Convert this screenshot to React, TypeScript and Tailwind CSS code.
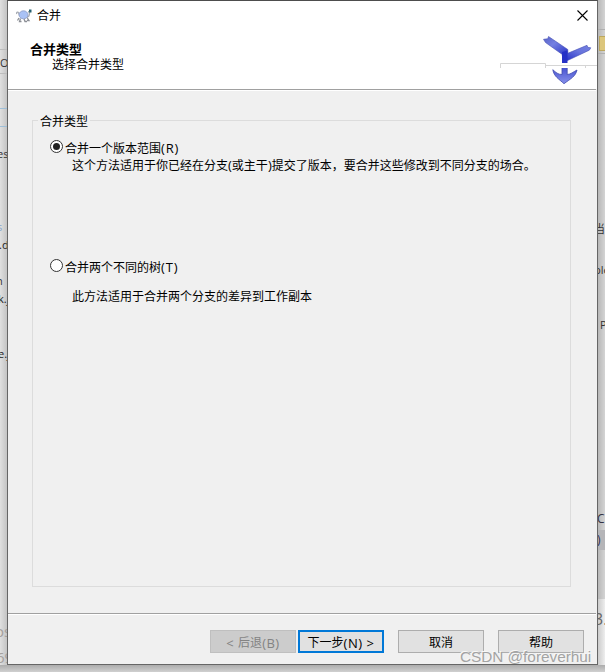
import React, { useState } from 'react';
import clsx from 'clsx';

type MergeType = 'range' | 'tree';

const BACKDROP_LEFT = [
  { text: 'O', className: 'left-0 top-[55px] text-[11px] text-[#333333]' },
  { text: 'es', className: 'left-[-3px] top-[146px] text-[11px] text-[#333333]' },
  { text: 's', className: 'left-[-3px] top-[219px] text-[11px] text-[#8aa6cc]' },
  { text: '.d', className: 'left-[-1px] top-[237px] text-[11px] text-[#222222]' },
  { text: 'n', className: 'left-[-4px] top-[273px] text-[11px] text-[#333333]' },
  { text: 'k.j', className: 'left-[-2px] top-[291px] text-[11px] text-[#222222]' },
  { text: 'e.j', className: 'left-[-2px] top-[346px] text-[11px] text-[#222222]' },
  { text: 'os', className: 'left-[-5px] top-[623px] text-[15px] text-[#a5a09c]' },
  { text: '69', className: 'left-[-4px] top-[649px] text-[15px] text-[#a5a09c]' },
];

const BACKDROP_RIGHT = [
  { text: '当', className: 'left-[-4px] top-[221px] text-[11px] text-[#333333]' },
  { text: 'ple', className: 'left-[-4px] top-[262px] text-[11px] text-[#333333]' },
  { text: 'P', className: 'left-[2px] top-[317px] text-[11px] text-[#333333]' },
  { text: 'C', className: 'left-[-1px] top-[511px] text-[12px] text-[#333344]' },
  { text: ')', className: 'left-[-1px] top-[532px] text-[12px] text-[#333355]' },
  { text: '3.', className: 'left-[-4px] top-[611px] text-[16px] text-[#666666]' },
];

const TurtleIcon = () => (
  <svg className="w-4 h-4 shrink-0" viewBox="0 0 16 16">
    <path d="M3 10L1.500 12.500M4.500 10.500l-1 3h2M8 11l1 2.500h2M11 9.500l2 3h-2" fill="none" stroke="#8c8f96" strokeWidth="1.300" />
    <path d="M.7 6c-.5-2 1.300-2.500 2-1l1 3M11 9c2 0 2.500-2 2.500-4V3.500" fill="none" stroke="#a9adb4" strokeWidth="1.300" />
    <ellipse cx="7.500" cy="6.800" rx="4.500" ry="4" fill="#a9c2f5" stroke="#8a9ac4" strokeWidth=".8" />
    <path d="M13 1.500h2.500v3H13z" fill="#24606f" />
    <path d="M12 3h1.200v1.500H12z" fill="#9ba9b0" />
  </svg>
);

const MergeLogo = () => (
  <svg className="absolute left-[492px] top-[35px] w-[97px] h-[50px]" viewBox="500 36 97 50">
    <defs>
      <linearGradient id="branchLeft" x1="0" y1="0" x2="1" y2="1">
        <stop offset="0" stopColor="#5963c7" />
        <stop offset=".4" stopColor="#7480e2" />
        <stop offset="1" stopColor="#2530c4" />
      </linearGradient>
      <linearGradient id="branchRight" x1="0" y1="1" x2="1" y2="0">
        <stop offset="0" stopColor="#202bc6" />
        <stop offset=".6" stopColor="#6874dd" />
        <stop offset="1" stopColor="#7480e0" />
      </linearGradient>
      <linearGradient id="arrow" x1="0" y1="0" x2="0" y2="1">
        <stop offset="0" stopColor="#4450d0" />
        <stop offset="1" stopColor="#8791ea" />
      </linearGradient>
    </defs>
    <path d="M543.500 39.300l4.300-.6.700-2.200L567.800 49.500V56h-5.500v-1.500L545.500 42.500z" fill="url(#branchLeft)" stroke="#4650b4" strokeWidth=".6" />
    <path d="M566.500 53.800L587 45.300l.8 2 3 .5-1.500 2.400L567.500 60.500l-5 .5V54z" fill="url(#branchRight)" stroke="#4650b4" strokeWidth=".6" />
    <path d="M562 52l5.500-1.500V63.500H562z" fill="#2631c6" />
    <path
      d="M562 67h5.200v7.500c3.500-.2 6-2.500 9.800-4.500-1.500 6.500-6 8.500-13 13.700-5-4.700-10-7-11.200-14C556 72.500 558 74.500 562 74.500z"
      fill="url(#arrow)"
      stroke="#3f4aaf"
      strokeWidth=".8"
    />
    {/* strip of the control that paints over the banner */}
    <path d="M500 63h97v5h-97z" fill="#fff" />
    <path d="M500.500 68v-4.500h45V68M546 65.500h51M585.500 66v2" fill="none" stroke="#d5d5d5" />
  </svg>
);

interface RadioRowProps {
  label: string;
  hotkey: string;
  checked: boolean;
  onSelect: () => void;
}

const RadioRow: React.FC<RadioRowProps> = ({ label, hotkey, checked, onSelect }) => (
  <button role="radio" aria-checked={checked} onClick={onSelect} className="flex items-start gap-[2px] h-4">
    <span className="w-[13px] h-[13px] shrink-0 rounded-full border border-[#333333] bg-white flex items-center justify-center">
      {checked && <span className="w-[7px] h-[7px] rounded-full bg-[#222222]" />}
    </span>
    <span className="leading-[17px] whitespace-nowrap">
      {label}<span className="text-[13px] tracking-[0.8px]">({hotkey})</span>
    </span>
  </button>
);

interface WizardButtonProps {
  children: React.ReactNode;
  variant?: 'normal' | 'primary' | 'disabled';
}

const WizardButton: React.FC<WizardButtonProps> = ({ children, variant = 'normal' }) => (
  <button
    disabled={variant === 'disabled'}
    className={clsx(
      'w-[86px] h-[23px] flex items-center justify-center whitespace-pre leading-4 pt-[2px]',
      variant === 'normal' && 'border border-[#adadad] bg-[#e1e1e1]',
      variant === 'primary' && 'border-2 border-[#0078d7] bg-[#e1e1e1]',
      variant === 'disabled' && 'border border-[#bfbfbf] bg-[#cccccc] text-[#838383]'
    )}
  >
    {children}
  </button>
);

export default function App() {
  const [mergeType, setMergeType] = useState<MergeType>('range');

  return (
    <div className="relative w-[605px] h-[672px] overflow-hidden bg-[#cccccc] flex flex-col text-xs text-black font-['Open_Sans','Noto_Sans_CJK_SC',sans-serif]">
      <div className="flex h-[665px]">
        {/* Window behind, left edge */}
        <div className="relative w-[7px] shrink-0 overflow-hidden bg-linear-to-r from-[#e0e0e0] to-[#c4c4c4]">
          <div className="absolute top-[49px] w-full h-[25px] border-y border-[#bdbdbd]" />
          <div className="absolute top-[108px] w-full h-[19px] border-y border-[#9fbfd8]" />
          {BACKDROP_LEFT.map((item) => (
            <span key={item.text} className={clsx('absolute leading-4 whitespace-nowrap', item.className)}>{item.text}</span>
          ))}
        </div>

        {/* Merge dialog */}
        <div className="relative w-[591px] shrink-0 border border-[#666666] border-t-[#4d4d4d] bg-[#f0f0f0] flex flex-col">
          <header className="h-[88px] shrink-0 bg-white">
            <div className="flex items-start h-[40px] pl-2 pr-[9px]">
              <div className="flex items-center gap-[5px] h-[29px]">
                <TurtleIcon />
                <span>合并</span>
              </div>
              <svg className="w-[11px] h-[11px] ml-auto mt-[9px]" viewBox="0 0 11 11">
                <path d="M.5.5l10 10M10.500.5l-10 10" stroke="#000" strokeWidth="1.100" />
              </svg>
            </div>
            <h1 className="pl-[22px] text-[13px] leading-4 font-bold">合并类型</h1>
            <p className="pl-[44px] leading-[15px]">选择合并类型</p>
          </header>
          <div className="h-[2px] shrink-0 w-[588px] bg-[#a0a0a0] border-b border-white" />

          <main className="px-6 pt-[29px] h-[522px] shrink-0">
            <fieldset className="relative w-[539px] h-[467px] border border-[#dcdcdc] pl-[17px] pt-[19px]">
              <span className="absolute left-[5px] top-[-7px] px-[2px] leading-4 bg-[#f0f0f0]">合并类型</span>
              <div role="radiogroup">
                <RadioRow label="合并一个版本范围" hotkey="R" checked={mergeType === 'range'} onSelect={() => setMergeType('range')} />
                <p className="pl-[22px] mt-[2px] leading-4 whitespace-nowrap">
                  这个方法适用于你已经在分支<span className="text-[13px] leading-none">(</span>或主干<span className="text-[13px] leading-none">)</span>提交了版本，要合并这些修改到不同分支的场合。
                </p>
                <div className="mt-[85px]">
                  <RadioRow label="合并两个不同的树" hotkey="T" checked={mergeType === 'tree'} onSelect={() => setMergeType('tree')} />
                </div>
                <p className="pl-[22px] mt-[14px] leading-4 whitespace-nowrap">此方法适用于合并两个分支的差异到工作副本</p>
              </div>
            </fieldset>
          </main>

          <div className="h-[2px] shrink-0 w-[588px] bg-[#a0a0a0] border-b border-white" />
          <footer className="flex justify-end pr-[13px] pt-[15px]">
            <div className="flex gap-[2px] mr-[14px]">
              <WizardButton variant="disabled">
                <span className="text-[13px] tracking-[0.5px]">{'< '}</span>后退<span className="text-[13px] tracking-[0.5px]">(B)</span>
              </WizardButton>
              <WizardButton variant="primary">
                下一步<span className="text-[13px] tracking-[0.5px]">{'(N) >'}</span>
              </WizardButton>
            </div>
            <div className="flex gap-[14px]">
              <WizardButton>取消</WizardButton>
              <WizardButton>帮助</WizardButton>
            </div>
          </footer>
          <MergeLogo />
        </div>

        {/* Window behind, right edge */}
        <div className="relative w-[7px] shrink-0 overflow-hidden bg-linear-to-r from-[#b8b8b8] to-[#d4d4d4]">
          <div className="absolute top-[29px] w-full h-[25px] border-y border-[#b0b0b0]" />
          <div className="absolute left-px top-[36px] w-[8px] h-[15px] bg-[#dcc67c] border border-[#bca75f]" />
          <div className="absolute top-[530px] w-full h-[20px] bg-[#b5b5b8]" />
          <div className="absolute top-[599px] w-full h-[66px] bg-linear-to-r from-[#cccccc] to-[#eeeeee]" />
          {BACKDROP_RIGHT.map((item) => (
            <span key={item.text} className={clsx('absolute leading-4 whitespace-nowrap', item.className)}>{item.text}</span>
          ))}
        </div>
      </div>

      {/* Drop shadow under the dialog */}
      <div className="h-[7px] shrink-0 bg-linear-to-b from-[#acacac] to-[#d0d0d0]" />

      <span className="absolute left-[460px] top-[648px] text-[15.3px] leading-[18px] whitespace-nowrap text-[#a3a3a3] font-['Liberation_Sans',sans-serif] [text-shadow:-1px_-1px_0_#f8f8f8]">
        CSDN @foreverhui
      </span>
    </div>
  );
}
